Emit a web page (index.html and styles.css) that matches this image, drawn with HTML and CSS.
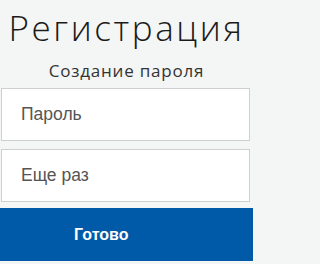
FILE: index.html
```html
<!DOCTYPE html>
<html lang="ru">
<head>
<meta charset="utf-8">
<link rel="stylesheet" href="styles.css">
</head>
<body>
<div class="page">
  <h1 class="title">Регистрация</h1>
  <p class="subtitle">Создание пароля</p>
  <div class="fields">
    <input class="field" type="password" placeholder="Пароль">
    <input class="field" type="password" placeholder="Еще раз">
  </div>
  <button class="submit" type="button">Готово</button>
</div>
</body>
</html>
```
FILE: styles.css
```css
html, body {
  margin: 0;
  padding: 0;
  background: #f4f5f5;
}
.page {
  width: 253px;
  display: flex;
  flex-direction: column;
  padding-top: 8px;
}
.title {
  margin: 0;
  font-family: "Open Sans", sans-serif;
  font-weight: 300;
  font-size: 35px;
  line-height: 40px;
  letter-spacing: 2.6px;
  color: #1a1a1a;
  text-align: center;
}
.subtitle {
  margin: 11px 0 0 0;
  font-family: "Open Sans", sans-serif;
  font-weight: 400;
  font-size: 17px;
  line-height: 24px;
  letter-spacing: 0.8px;
  color: #333;
  text-align: center;
}
.fields {
  display: flex;
  flex-direction: column;
  gap: 8px;
  padding-left: 1px;
  margin-top: 5px;
}
.field {
  box-sizing: border-box;
  width: 249px;
  height: 53px;
  margin: 0;
  padding: 0 0 0 19px;
  border: 1px solid #cfcfcf;
  background: #fff;
  font-family: "Liberation Sans", Arial, sans-serif;
  font-size: 17.5px;
  color: #555;
  outline: none;
}
.field::placeholder {
  color: #555;
  opacity: 1;
}
.submit {
  margin-top: 6px;
  width: 253px;
  height: 53px;
  border: 0;
  padding: 0 0 0 74px;
  text-align: left;
  background: #005aa8;
  color: #fff;
  font-family: "Liberation Sans", Arial, sans-serif;
  font-weight: 700;
  font-size: 16px;
  cursor: pointer;
}
```
